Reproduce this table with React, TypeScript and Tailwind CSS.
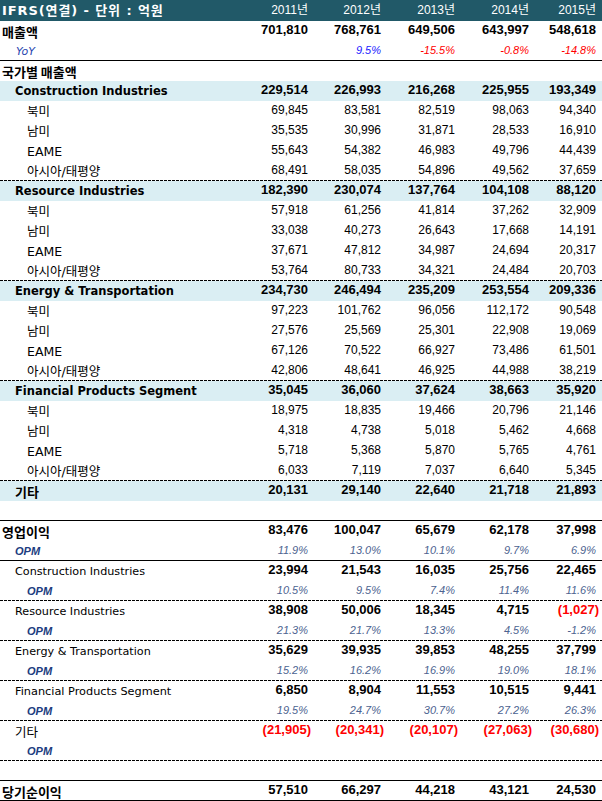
import React from "react";

type Line = "none" | "solid" | "dashed";

type RowData = {
    label: string;
    labelCls: string;
    values: string[];
    valCls: string | string[];
    band?: boolean;
    line?: Line;
};

const padCls = ["pr-[1px]", "pr-[2px]", "pr-[2px]", "pr-[2px]", "pr-[6px]"];

const lineCls: Record<Line, string> = {
    none: "bg-transparent",
    solid: "bg-black",
    dashed: "bg-[repeating-linear-gradient(to_right,#000_0px,#000_3px,transparent_3px,transparent_4px)]",
};

// label styles
const gulimBold = "font-['DejaVu_Sans','Noto_Sans_CJK_KR',sans-serif] font-bold text-[11.5px]";
const krBold = "font-['Noto_Sans_CJK_KR',sans-serif] font-bold text-[13px] pl-[2px]";
const seg = `${gulimBold} pl-[15px]`;
const sub = "font-['DejaVu_Sans','Noto_Sans_CJK_KR',sans-serif] text-[12.5px] pl-[27px]";
const segLow = "font-['DejaVu_Sans','Noto_Sans_CJK_KR',sans-serif] text-[11.2px] pl-[15px]";
const opmLabel = "font-['Liberation_Sans',sans-serif] font-bold italic text-[11px] text-[#203c80]";

// value styles
const numReg = "font-['Liberation_Sans',sans-serif] text-[12px] text-black";
const numBold = "font-['Liberation_Sans',sans-serif] font-bold text-[13px] text-black";
const opmVal = "font-['Liberation_Sans',sans-serif] italic text-[11px] text-[#4c6390]";
const red = "font-['Liberation_Sans',sans-serif] font-bold text-[13px] text-[#ff0000] mr-[-3px]";
const yoyBlue = "font-['Liberation_Sans',sans-serif] italic text-[11px] text-[#1a1aff]";
const yoyRed = "font-['Liberation_Sans',sans-serif] italic text-[11px] text-[#ff0000]";

const regions = ["북미", "남미", "EAME", "아시아/태평양"];

const segments: { name: string; total: string[]; rows: string[][] }[] = [
    {
        name: "Construction Industries",
        total: ["229,514", "226,993", "216,268", "225,955", "193,349"],
        rows: [
            ["69,845", "83,581", "82,519", "98,063", "94,340"],
            ["35,535", "30,996", "31,871", "28,533", "16,910"],
            ["55,643", "54,382", "46,983", "49,796", "44,439"],
            ["68,491", "58,035", "54,896", "49,562", "37,659"],
        ],
    },
    {
        name: "Resource Industries",
        total: ["182,390", "230,074", "137,764", "104,108", "88,120"],
        rows: [
            ["57,918", "61,256", "41,814", "37,262", "32,909"],
            ["33,038", "40,273", "26,643", "17,668", "14,191"],
            ["37,671", "47,812", "34,987", "24,694", "20,317"],
            ["53,764", "80,733", "34,321", "24,484", "20,703"],
        ],
    },
    {
        name: "Energy & Transportation",
        total: ["234,730", "246,494", "235,209", "253,554", "209,336"],
        rows: [
            ["97,223", "101,762", "96,056", "112,172", "90,548"],
            ["27,576", "25,569", "25,301", "22,908", "19,069"],
            ["67,126", "70,522", "66,927", "73,486", "61,501"],
            ["42,806", "48,641", "46,925", "44,988", "38,219"],
        ],
    },
    {
        name: "Financial Products Segment",
        total: ["35,045", "36,060", "37,624", "38,663", "35,920"],
        rows: [
            ["18,975", "18,835", "19,466", "20,796", "21,146"],
            ["4,318", "4,738", "5,018", "5,462", "4,668"],
            ["5,718", "5,368", "5,870", "5,765", "4,761"],
            ["6,033", "7,119", "7,037", "6,640", "5,345"],
        ],
    },
];

const profits: { name: string; cls: string; vals: string[]; opm: string[] }[] = [
    {
        name: "Construction Industries",
        cls: segLow,
        vals: ["23,994", "21,543", "16,035", "25,756", "22,465"],
        opm: ["10.5%", "9.5%", "7.4%", "11.4%", "11.6%"],
    },
    {
        name: "Resource Industries",
        cls: segLow,
        vals: ["38,908", "50,006", "18,345", "4,715", "(1,027)"],
        opm: ["21.3%", "21.7%", "13.3%", "4.5%", "-1.2%"],
    },
    {
        name: "Energy & Transportation",
        cls: segLow,
        vals: ["35,629", "39,935", "39,853", "48,255", "37,799"],
        opm: ["15.2%", "16.2%", "16.9%", "19.0%", "18.1%"],
    },
    {
        name: "Financial Products Segment",
        cls: "font-['DejaVu_Sans','Noto_Sans_CJK_KR',sans-serif] text-[11.3px] pl-[15px]",
        vals: ["6,850", "8,904", "11,553", "10,515", "9,441"],
        opm: ["19.5%", "24.7%", "30.7%", "27.2%", "26.3%"],
    },
    {
        name: "기타",
        cls: "font-['Noto_Sans_CJK_KR',sans-serif] text-[12.5px] pl-[15px]",
        vals: ["(21,905)", "(20,341)", "(20,107)", "(27,063)", "(30,680)"],
        opm: ["", "", "", "", ""],
    },
];

const Row = ({ label, labelCls, values, valCls, band, line = "none" }: RowData) => (
    <div className={`flex flex-col h-[20px] ${band ? "bg-[#daeef3]" : "bg-white"}`}>
        <div className="grid grid-cols-[235px_74px_74px_74px_74px_71px] h-[19px]">
            <div className={`whitespace-nowrap leading-[19px] pt-[1px] ${labelCls}`}>{label}</div>
            {values.map((v, i) => {
                let cls = Array.isArray(valCls) ? valCls[i] : valCls;
                if (v.startsWith("(")) cls = red;
                return (
                    <div key={i} className={`text-right whitespace-nowrap leading-[18px] ${padCls[i]}`}>
                        <div className={cls}>{v}</div>
                    </div>
                );
            })}
        </div>
        <div className={`h-px ${lineCls[line]}`} />
    </div>
);

const empty = ["", "", "", "", ""];

export default function App() {
    const rows: RowData[] = [];

    rows.push({
        label: "매출액",
        labelCls: krBold,
        values: ["701,810", "768,761", "649,506", "643,997", "548,618"],
        valCls: numBold,
    });
    rows.push({
        label: "YoY",
        labelCls: "font-['DejaVu_Sans',sans-serif] italic text-[11px] text-[#2b47b0] pl-[16px]",
        values: ["", "9.5%", "-15.5%", "-0.8%", "-14.8%"],
        valCls: [yoyBlue, yoyBlue, yoyRed, yoyRed, yoyRed],
        line: "solid",
    });
    rows.push({ label: "국가별 매출액", labelCls: krBold, values: empty, valCls: "" });

    segments.forEach((s) => {
        rows.push({ label: s.name, labelCls: seg, values: s.total, valCls: numBold, band: true });
        s.rows.forEach((r, i) => {
            rows.push({
                label: regions[i],
                labelCls: sub,
                values: r,
                valCls: numReg,
                line: i === 3 ? "dashed" : "none",
            });
        });
    });

    rows.push({
        label: "기타",
        labelCls: "font-['Noto_Sans_CJK_KR',sans-serif] font-bold text-[13px] pl-[15px]",
        values: ["20,131", "29,140", "22,640", "21,718", "21,893"],
        valCls: numBold,
        band: true,
    });
    rows.push({ label: "", labelCls: "", values: empty, valCls: "", line: "solid" });

    rows.push({
        label: "영업이익",
        labelCls: krBold,
        values: ["83,476", "100,047", "65,679", "62,178", "37,998"],
        valCls: numBold,
    });
    rows.push({
        label: "OPM",
        labelCls: `${opmLabel} pl-[15px]`,
        values: ["11.9%", "13.0%", "10.1%", "9.7%", "6.9%"],
        valCls: opmVal,
        line: "solid",
    });

    profits.forEach((p) => {
        rows.push({ label: p.name, labelCls: p.cls, values: p.vals, valCls: numBold });
        rows.push({
            label: "OPM",
            labelCls: `${opmLabel} pl-[27px]`,
            values: p.opm,
            valCls: opmVal,
            line: "dashed",
        });
    });

    rows.push({ label: "", labelCls: "", values: empty, valCls: "", line: "solid" });
    rows.push({
        label: "당기순이익",
        labelCls: krBold,
        values: ["57,510", "66,297", "44,218", "43,121", "24,530"],
        valCls: numBold,
        line: "solid",
    });

    const years = ["2011년", "2012년", "2013년", "2014년", "2015년"];

    return (
        <div className="w-[602px] h-[801px] bg-white overflow-hidden">
            {/* header */}
            <div className="grid grid-cols-[235px_74px_74px_74px_74px_71px] h-[21px] bg-[#215968] text-white leading-[19px] pt-[1px]">
                <div className="pl-[2px] whitespace-nowrap font-['DejaVu_Sans','Noto_Sans_CJK_KR',sans-serif] font-bold text-[13px] tracking-[0.9px]">
                    IFRS(연결) - 단위 : 억원
                </div>
                {years.map((y, i) => (
                    <div
                        key={y}
                        className={`text-right whitespace-nowrap font-['Liberation_Sans','Noto_Sans_CJK_KR',sans-serif] text-[12px] ${padCls[i]}`}
                    >
                        {y}
                    </div>
                ))}
            </div>

            {rows.map((r, i) => (
                <Row key={i} {...r} />
            ))}
        </div>
    );
}
